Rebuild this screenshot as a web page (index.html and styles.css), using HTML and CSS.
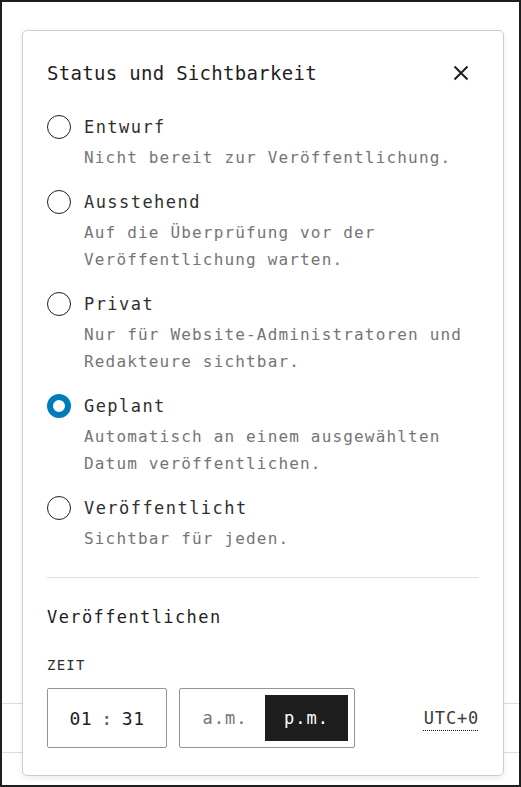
FILE: index.html
```html
<!DOCTYPE html>
<html lang="de">
<head>
    <meta charset="UTF-8">
    <meta name="viewport" content="width=device-width, initial-scale=1.0">
    <title>Status und Sichtbarkeit</title>
    <link rel="stylesheet" href="styles.css">
</head>
<body>
    <div class="frame">
        <div class="bg-row"></div>
        <div class="bg-row"></div>

        <div class="popover">
            <div class="pop-head">
                <h2>Status und Sichtbarkeit</h2>
                <button class="close" aria-label="Schließen">
                    <svg width="24" height="24" viewBox="0 0 24 24"><path d="M5.5 5.5l13 13M18.5 5.5l-13 13" stroke="#1e1e1e" stroke-width="2" fill="none"/></svg>
                </button>
            </div>

            <div class="options">
                <label class="option">
                    <span class="radio"></span>
                    <span class="opt-label">Entwurf</span>
                    <span class="opt-desc">Nicht bereit zur Veröffentlichung.</span>
                </label>
                <label class="option">
                    <span class="radio"></span>
                    <span class="opt-label">Ausstehend</span>
                    <span class="opt-desc">Auf die Überprüfung vor der<br>Veröffentlichung warten.</span>
                </label>
                <label class="option">
                    <span class="radio"></span>
                    <span class="opt-label">Privat</span>
                    <span class="opt-desc">Nur für Website-Administratoren und<br>Redakteure sichtbar.</span>
                </label>
                <label class="option">
                    <span class="radio checked"></span>
                    <span class="opt-label">Geplant</span>
                    <span class="opt-desc">Automatisch an einem ausgewählten<br>Datum veröffentlichen.</span>
                </label>
                <label class="option">
                    <span class="radio"></span>
                    <span class="opt-label">Veröffentlicht</span>
                    <span class="opt-desc">Sichtbar für jeden.</span>
                </label>
            </div>

            <hr class="divider">

            <h3>Veröffentlichen</h3>
            <div class="field-label">ZEIT</div>
            <div class="time-row">
                <div class="time-box">01 <span class="colon">:</span> 31</div>
                <div class="ampm">
                    <span class="seg">a.m.</span>
                    <span class="seg active">p.m.</span>
                </div>
                <span class="tz">UTC+0</span>
            </div>
        </div>
    </div>
</body>
</html>
```

FILE: styles.css
```css
body { margin: 0; font-family: "DejaVu Sans Mono", "Liberation Mono", monospace; color: #1e1e1e; background: #fff; }
.frame { position: relative; width: 521px; height: 787px; box-sizing: border-box; border: 2px solid #1e1e1e; padding-top: 701px; overflow: hidden; }
.bg-row { height: 48px; border-top: 1px solid #dddddd; }

.popover { position: absolute; top: 28px; left: 20px; width: 482px; box-sizing: border-box; padding: 28px 24px 27px; background: #fff; border: 1px solid #cccccc; border-radius: 5px; box-shadow: 0 2px 6px rgba(0, 0, 0, 0.08); }

.pop-head { display: flex; align-items: center; justify-content: space-between; height: 28px; }
.pop-head h2 { margin: 0; font-size: 19px; font-weight: normal; letter-spacing: 0.3px; line-height: 28px; }
.close { width: 36px; height: 36px; padding: 0; border: 0; background: none; display: flex; align-items: center; justify-content: center; }

.options { margin-top: 28px; display: flex; flex-direction: column; gap: 19px; }
.option { display: grid; grid-template-columns: 24px 1fr; column-gap: 13px; }
.radio { width: 24px; height: 24px; box-sizing: border-box; border: 1.5px solid #1e1e1e; border-radius: 50%; }
.radio.checked { border: 6px solid #007cba; }
.opt-label { font-size: 17px; letter-spacing: 1.45px; line-height: 24px; color: #2f2f2f; }
.opt-desc { grid-column: 2; margin-top: 5px; font-size: 16px; letter-spacing: 1.17px; line-height: 27px; color: #757575; }

.divider { margin: 25px 0 0; border: 0; border-top: 1px solid #e0e0e0; }
h3 { margin: 27px 0 0; font-size: 17px; font-weight: normal; letter-spacing: 1.4px; line-height: 24px; }
.field-label { margin-top: 26px; font-size: 14px; letter-spacing: 1.2px; line-height: 20px; color: #2f2f2f; }

.time-row { margin-top: 13px; display: flex; align-items: center; gap: 12px; }
.time-box { width: 120px; height: 60px; box-sizing: border-box; border: 1px solid #949494; border-radius: 2px; display: flex; align-items: center; justify-content: center; gap: 9px; font-size: 18px; letter-spacing: 0.6px; }
.colon { color: #555; }
.ampm { width: 176px; height: 60px; box-sizing: border-box; border: 1px solid #949494; border-radius: 2px; padding: 6px 6px 6px 5px; display: flex; }
.seg { flex: 1; display: flex; align-items: center; justify-content: center; font-size: 17px; letter-spacing: 1px; color: #757575; }
.seg.active { background: #1e1e1e; color: #fff; flex: 0 0 83px; }
.tz { margin-left: auto; font-size: 17px; letter-spacing: 0.8px; color: #3c3c3c; text-decoration: underline dotted #1e1e1e 1px; text-underline-offset: 6px; }
```
